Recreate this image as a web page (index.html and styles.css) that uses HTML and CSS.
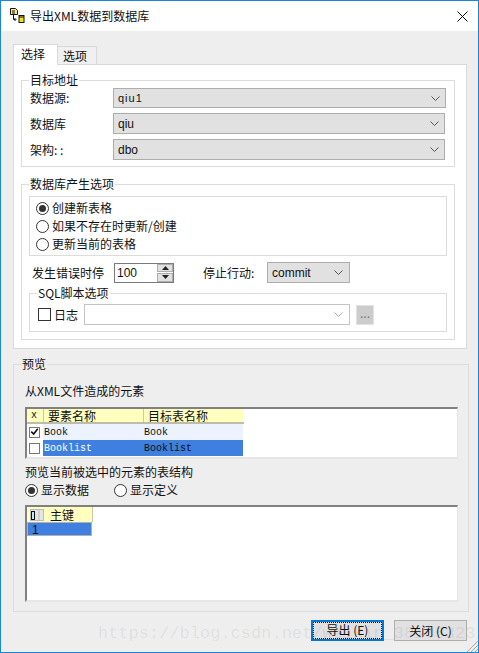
FILE: index.html
```html
<!DOCTYPE html>
<html lang="zh-CN">
<head>
  <meta charset="UTF-8">
  <title>导出XML数据到数据库</title>
  <link rel="stylesheet" href="styles.css">
</head>
<body>
  <div class="window">
    <div class="titlebar">
      <svg class="app-icon" width="18" height="18" viewBox="0 0 18 18">
        <path d="M1.500 1.500h5l2 2v4h-7z" fill="#ffe97a" stroke="#111"/>
        <path d="M3 4h3M3 6h3" stroke="#111"/>
        <path d="M4.500 8v4.500h2M5.500 11l1.500 1.500-1.500 1.500" fill="none" stroke="#111"/>
        <rect x="10" y="8.500" width="5" height="7" fill="#f2e21a" stroke="#111"/>
        <path d="M10 10h5" stroke="#111"/>
      </svg>
      <span class="title-text">导出XML数据到数据库</span>
      <svg class="close-icon" width="11" height="11" viewBox="0 0 11 11">
        <path d="M.5.5l10 10M10.500.5l-10 10" stroke="#111" fill="none"/>
      </svg>
    </div>

    <div class="content">
      <div class="tabs">
        <div class="tab active">选择</div>
        <div class="tab">选项</div>
      </div>

      <div class="pane">
        <fieldset class="group target-group">
          <legend>目标地址</legend>
          <div class="field first">
            <label>数据源:</label>
            <div class="combo wide"><span class="mono-ish">qiu1</span><svg class="chev" width="9" height="5" viewBox="0 0 9 5"><path d="M.5.5l4 4 4-4" fill="none" stroke="#555"/></svg></div>
          </div>
          <div class="field">
            <label>数据库</label>
            <div class="combo"><span>qiu</span><svg class="chev" width="9" height="5" viewBox="0 0 9 5"><path d="M.5.5l4 4 4-4" fill="none" stroke="#555"/></svg></div>
          </div>
          <div class="field">
            <label>架构: :</label>
            <div class="combo"><span>dbo</span><svg class="chev" width="9" height="5" viewBox="0 0 9 5"><path d="M.5.5l4 4 4-4" fill="none" stroke="#555"/></svg></div>
          </div>
        </fieldset>

        <fieldset class="group db-group">
          <legend>数据库产生选项</legend>
          <div class="radio-box">
            <div class="radio-row"><span class="radio on"></span>创建新表格</div>
            <div class="radio-row"><span class="radio"></span>如果不存在时更新/创建</div>
            <div class="radio-row"><span class="radio"></span>更新当前的表格</div>
          </div>
          <div class="error-row">
            <span class="error-label">发生错误时停</span>
            <div class="spinner">
              <span class="spin-value">100</span>
              <div class="spin-btns">
                <span class="spin-btn"><svg width="7" height="4" viewBox="0 0 7 4"><path d="M3.500 0l3.500 4H0z" fill="#222"/></svg></span>
                <span class="spin-btn"><svg width="7" height="4" viewBox="0 0 7 4"><path d="M0 0h7L3.500 4z" fill="#222"/></svg></span>
              </div>
            </div>
            <span class="stop-label">停止行动:</span>
            <div class="combo commit"><span>commit</span><svg class="chev" width="9" height="5" viewBox="0 0 9 5"><path d="M.5.5l4 4 4-4" fill="none" stroke="#555"/></svg></div>
          </div>
          <fieldset class="group sql-group">
            <legend>SQL脚本选项</legend>
            <div class="log-row">
              <span class="check"></span>
              <span class="log-label">日志</span>
              <div class="log-combo"><svg class="chev" width="9" height="5" viewBox="0 0 9 5"><path d="M.5.5l4 4 4-4" fill="none" stroke="#aaa"/></svg></div>
              <div class="browse-btn">...</div>
            </div>
          </fieldset>
        </fieldset>
      </div>

      <fieldset class="group preview-group">
        <legend>预览</legend>
        <div class="caption">从XML文件造成的元素</div>
        <div class="list-box">
          <div class="grid-head">
            <span class="col-x">x</span>
            <span class="col-name">要素名称</span>
            <span class="col-target">目标表名称</span>
          </div>
          <div class="grid-row">
            <span class="row-check"><svg width="11" height="10" viewBox="0 0 11 10"><path d="M1.500 4.500l3 3 5-6.500" fill="none" stroke="#111" stroke-width="2"/></svg></span>
            <span class="cell-name">Book</span>
            <span class="cell-target">Book</span>
          </div>
          <div class="grid-row selected">
            <span class="row-check"></span>
            <span class="cell-name">Booklist</span>
            <span class="cell-target">Booklist</span>
          </div>
        </div>
        <div class="caption second">预览当前被选中的元素的表结构</div>
        <div class="show-row">
          <span class="radio on"></span><span class="show-label">显示数据</span>
          <span class="radio"></span><span class="show-label">显示定义</span>
        </div>
        <div class="data-box">
          <div class="data-head">
            <svg class="table-icon" width="14" height="12" viewBox="0 0 14 12"><rect x=".5" y=".5" width="13" height="11" fill="#e4e4e4" stroke="#bbb"/><path d="M9 .5v11" stroke="#bbb"/><rect x="1.500" y="2.500" width="3" height="8" fill="#bfeaf5" stroke="#111"/></svg>
            <span>主键</span>
          </div>
          <div class="data-row">1</div>
        </div>
      </fieldset>

      <div class="actions">
        <button class="btn default"><span>导出 (E)</span></button>
        <button class="btn">关闭 (C)</button>
      </div>
    </div>

    <div class="watermark">https://blog.csdn.net/weixin_38105323</div>
    <svg class="grip" width="12" height="12" viewBox="0 0 12 12"><path d="M12 1L1 12M12 5l-7 7M12 9l-3 3" stroke="#aaa" fill="none"/></svg>
  </div>
</body>
</html>
```

FILE: styles.css
```css
* {
  box-sizing: border-box;
}

body {
  margin: 0;
  font-family: "Noto Sans CJK SC", "Liberation Sans", sans-serif;
  font-size: 12px;
  line-height: 14px;
  color: #111;
}

.window {
  position: relative;
  width: 479px;
  height: 653px;
  overflow: hidden;
  background: #eeeeee;
  border: 1px solid #1a86d9;
}

.titlebar {
  display: flex;
  align-items: center;
  height: 30px;
  padding: 0 10px 0 8px;
  background: #fff;
}

.title-text {
  margin-left: 3px;
  flex: 1;
}

.content {
  padding: 13px 9px 0 12px;
}

.tabs {
  display: flex;
  align-items: flex-end;
  height: 20px;
}

.tab {
  width: 39px;
  height: 18px;
  padding: 2px 0 0 5px;
  background: #f0f0f0;
  border: 1px solid #d9d9d9;
  border-bottom: none;
  border-left: none;
}

.tab.active {
  position: relative;
  width: 45px;
  height: 21px;
  margin-bottom: -1px;
  padding: 2px 0 0 7px;
  background: #fff;
  border-left: 1px solid #d9d9d9;
}

.pane {
  height: 285px;
  margin-right: 2px;
  padding: 8px 11px 0 7px;
  background: #fff;
  border: 1px solid #d9d9d9;
}

.group {
  min-width: 0;
  margin: 0;
  padding: 0 8px;
  border: 1px solid #dcdcdc;
}

.group legend {
  height: 14px;
  margin-left: -1px;
  padding: 0 1px;
}

.target-group {
  height: 94px;
}

.field {
  display: flex;
  align-items: center;
  margin-top: 5px;
}

.field.first {
  margin-top: 1px;
}

.field label {
  width: 83px;
}

.combo {
  display: flex;
  align-items: center;
  justify-content: space-between;
  flex: 1;
  height: 21px;
  padding: 0 5px 0 4px;
  margin-right: 1px;
  font-family: "Liberation Sans", sans-serif;
  background: #e1e1e1;
  border: 1px solid #adadad;
}

.combo.wide {
  height: 20px;
  margin-right: 0;
}

.mono-ish {
  letter-spacing: 1px;
  font-size: 11px;
}

.db-group {
  height: 163px;
  margin-top: 10px;
  padding: 0 7px;
}

.db-group > legend {
  margin-left: 0;
}

.radio-box {
  height: 60px;
  margin-top: 5px;
  padding-top: 2px;
  border: 1px solid #dcdcdc;
}

.radio-row {
  display: flex;
  align-items: center;
  height: 18px;
  padding-left: 6px;
}

.radio {
  position: relative;
  flex: none;
  width: 13px;
  height: 13px;
  margin-right: 3px;
  background: #fff;
  border: 1px solid #333;
  border-radius: 50%;
}

.radio.on::after {
  content: "";
  position: absolute;
  top: 2px;
  left: 2px;
  width: 7px;
  height: 7px;
  background: #333;
  border-radius: 50%;
}

.error-row {
  display: flex;
  align-items: center;
  height: 21px;
  margin-top: 6px;
  padding-left: 3px;
}

.error-label {
  width: 82px;
}

.spinner {
  display: flex;
  width: 60px;
  height: 20px;
  background: #fff;
  border: 1px solid #7a7a7a;
}

.spin-value {
  flex: 1;
  padding: 2px 0 0 2px;
  font-family: "Liberation Sans", sans-serif;
}

.spin-btns {
  display: flex;
  flex-direction: column;
  gap: 1px;
  width: 16px;
  background: #fff;
}

.spin-btn {
  display: flex;
  flex: 1;
  align-items: center;
  justify-content: center;
  background: #e1e1e1;
  border: 1px solid #adadad;
}

.stop-label {
  width: 64px;
  margin-left: 29px;
}

.combo.commit {
  flex: none;
  width: 83px;
  margin: 0;
  padding-right: 6px;
}

.sql-group {
  height: 46px;
  margin-top: 3px;
}

.log-row {
  display: flex;
  align-items: center;
  margin-top: 4px;
}

.check {
  flex: none;
  width: 13px;
  height: 13px;
  background: #fff;
  border: 1px solid #333;
}

.log-label {
  width: 30px;
  margin-left: 3px;
}

.log-combo {
  display: flex;
  align-items: center;
  justify-content: flex-end;
  width: 266px;
  height: 21px;
  padding-right: 6px;
  background: #fff;
  border: 1px solid #c4c4c4;
}

.browse-btn {
  width: 18px;
  height: 20px;
  margin-left: 6px;
  text-align: center;
  color: #777;
  background: #ccc;
  border: 1px solid #e2e2e2;
}

.preview-group {
  height: 255px;
  margin-top: 8px;
  padding: 0 10px 0 11px;
  background: #eee;
  border-color: #dcdcdc;
}

.preview-group > legend {
  margin-left: -4px;
}

.caption {
  margin-top: 13px;
}

.caption.second {
  margin-top: 6px;
}

.list-box {
  height: 52px;
  margin-top: 9px;
  background: #fff;
  border: 2px solid;
  border-color: #808080 #e6e6e6 #e6e6e6 #808080;
  border-width: 2px 1px 2px 2px;
}

.grid-head {
  display: flex;
  width: 217px;
  height: 15px;
  background: #ffffc0;
  border-bottom: 2px solid #bdbda8;
  line-height: 13px;
}

.col-x {
  width: 16px;
  padding-left: 4px;
  font-family: "Liberation Mono", monospace;
  font-size: 10px;
}

.col-name {
  width: 100px;
  padding-left: 4px;
  border-left: 1px solid #d6c98a;
}

.col-target {
  width: 100px;
  padding-left: 4px;
  border-left: 1px solid #d6c98a;
}

.grid-row {
  display: flex;
  align-items: center;
  height: 16px;
  font-family: "Liberation Mono", monospace;
  font-size: 10px;
}

.row-check {
  display: flex;
  flex: none;
  align-items: center;
  justify-content: center;
  width: 11px;
  height: 11px;
  margin: 0 3px 0 2px;
  background: #fff;
  border: 1px solid #777;
}

.cell-name,
.cell-target {
  width: 100px;
  height: 16px;
  padding: 1px 0 0 1px;
  line-height: 16px;
  background: #ecf3fe;
}

.selected .cell-name,
.selected .cell-target {
  background: #3e7fdf;
}

.selected .cell-name {
  color: #fff;
}

.show-row {
  display: flex;
  align-items: center;
  height: 14px;
  margin-top: 4px;
}

.show-label {
  width: 73px;
}

.data-box {
  height: 97px;
  margin-top: 8px;
  background: #fff;
  border: 2px solid;
  border-color: #808080 #e6e6e6 #e6e6e6 #808080;
  border-width: 2px 1px 2px 2px;
}

.data-head {
  display: flex;
  align-items: center;
  width: 66px;
  height: 15px;
  padding-left: 3px;
  background: #ffffc0;
  border-right: 1px solid #c9c9a0;
}

.data-head span {
  margin-left: 6px;
}

.data-row {
  width: 65px;
  height: 14px;
  padding-left: 4px;
  line-height: 14px;
  font-family: "Liberation Sans", sans-serif;
  background: #3e7fdf;
  border: 1px solid #b0b0b0;
}

.actions {
  display: flex;
  justify-content: flex-end;
  gap: 10px;
  margin-top: 8px;
  padding-right: 2px;
}

.btn {
  width: 73px;
  height: 21px;
  padding: 0;
  font: inherit;
  color: #111;
  background: #e1e1e1;
  border: 1px solid #adadad;
}

.btn.default {
  padding: 1px;
  border: 2px solid #0078d7;
}

.btn.default span {
  display: block;
  height: 15px;
  outline: 1px dotted #111;
}

.watermark {
  position: absolute;
  left: 97px;
  top: 623px;
  font-family: "Liberation Mono", monospace;
  font-size: 17px;
  line-height: 20px;
  color: rgba(0, 0, 0, 0.08);
  pointer-events: none;
  white-space: nowrap;
}

.grip {
  position: absolute;
  right: 0;
  bottom: 0;
}
```
